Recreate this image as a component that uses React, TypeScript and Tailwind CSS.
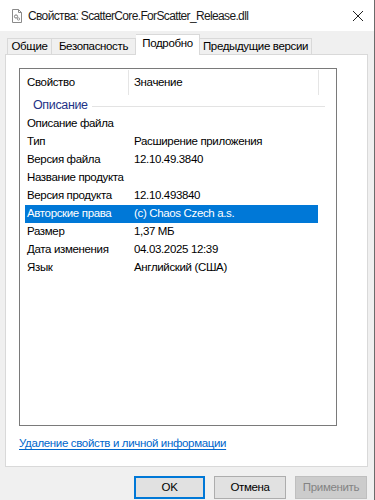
import React from "react";

const rows: [string, string][] = [
  ["Описание файла", ""],
  ["Тип", "Расширение приложения"],
  ["Версия файла", "12.10.49.3840"],
  ["Название продукта", ""],
  ["Версия продукта", "12.10.493840"],
  ["Авторские права", "(c) Chaos Czech a.s."],
  ["Размер", "1,37 МБ"],
  ["Дата изменения", "04.03.2025 12:39"],
  ["Язык", "Английский (США)"],
];

function FileIcon() {
  return (
    <svg width="12" height="14" viewBox="0 0 12 14">
      <path d="M1.5 0.5h6l3 3v10h-9z" fill="#fff" stroke="#8a8a8a" />
      <path d="M7.5 0.5v3h3" fill="none" stroke="#8a8a8a" />
      <circle cx="5" cy="7.5" r="1.6" fill="none" stroke="#7a7a7a" />
      <circle cx="7.5" cy="10" r="1.2" fill="none" stroke="#9a9a9a" />
    </svg>
  );
}

export default function App() {
  return (
    <div
      className="w-[375px] h-[500px] bg-[#f0f0f0] flex flex-col text-[11.5px] tracking-[-0.35px] text-black border-r border-[#6b6b6b] overflow-hidden whitespace-nowrap"
      style={{ fontFamily: '"Liberation Sans", Arial, sans-serif' }}
    >
      <div className="h-[31px] bg-white flex items-center pl-[11px] shrink-0">
        <FileIcon />
        <span className="ml-[5px] text-[12px] tracking-[-0.65px] text-[#1a1a1a]">
          Свойства: ScatterCore.ForScatter_Release.dll
        </span>
        <div className="ml-auto mr-[10px] w-[12px] h-[12px] flex items-center justify-center">
          <svg width="12" height="12" viewBox="0 0 12 12">
            <path d="M1 1L11 11M11 1L1 11" stroke="#222" strokeWidth="1" />
          </svg>
        </div>
      </div>
      <div className="flex items-end h-[23px] pl-[7px] shrink-0 relative z-10">
        <div className="h-[16px] w-[45px] flex items-center justify-center border border-b-0 border-[#d9d9d9] bg-[#f0f0f0] leading-none">
          Общие
        </div>
        <div className="h-[16px] w-[84px] flex items-center justify-center border border-l-0 border-b-0 border-[#d9d9d9] bg-[#f0f0f0] leading-none">
          Безопасность
        </div>
        <div className="h-[21px] w-[64px] -mb-[1px] pb-[2px] flex items-center justify-center border border-l-0 border-b-0 border-[#d9d9d9] bg-white leading-none">
          Подробно
        </div>
        <div className="h-[16px] w-[112px] flex items-center justify-center border border-l-0 border-b-0 border-[#d9d9d9] bg-[#f0f0f0] leading-none">
          Предыдущие версии
        </div>
      </div>
      <div className="ml-[5px] w-[363px] h-[413px] bg-white border border-[#d9d9d9] flex flex-col pl-[13px] pt-[13px] shrink-0">
        <div className="w-[318px] h-[358px] border border-[#7a7a7a] flex flex-col pl-[5px] pt-[1px]">
          <div className="h-[25px] flex items-center w-[294px] shrink-0">
            <div className="w-[104px] pl-[2px] h-full flex items-center border-r border-[#e5e5e5]">
              Свойство
            </div>
            <div className="flex-1 pl-[5px] h-full flex items-center border-r border-[#e5e5e5]">
              Значение
            </div>
          </div>
          <div className="h-[19px] flex items-center mt-[1px] pl-[8px] w-[300px]">
            <span className="text-[12.5px] text-[#1e3287]">Описание</span>
            <div className="flex-1 ml-[4px] h-px bg-[#e3e3e3] mt-[1px]" />
          </div>
          {rows.map(([k, v], i) => {
            const sel = i === 5;
            return (
              <div
                key={k}
                className={`h-[18px] flex items-center w-[293px] ${
                  sel ? "bg-[#0078d7] text-white" : ""
                }`}
              >
                <div className="w-[109px] pl-[2px]">{k}</div>
                <div>{v}</div>
              </div>
            );
          })}
        </div>
        <div className="mt-[9px]">
          <span className="text-[#0066cc] underline underline-offset-[2px]">
            Удаление свойств и личной информации
          </span>
        </div>
      </div>
      <div className="flex justify-end gap-[9px] pr-[7px] mt-[9px]">
        <div className="w-[71px] h-[23px] border-2 border-[#0078d7] bg-[#e1e1e1] flex items-center justify-center">
          OK
        </div>
        <div className="w-[72px] h-[23px] border border-[#adadad] bg-[#e1e1e1] flex items-center justify-center">
          Отмена
        </div>
        <div className="w-[72px] h-[23px] border border-[#bfbfbf] bg-[#cccccc] text-[#838383] flex items-center justify-center">
          Применить
        </div>
      </div>
    </div>
  );
}
